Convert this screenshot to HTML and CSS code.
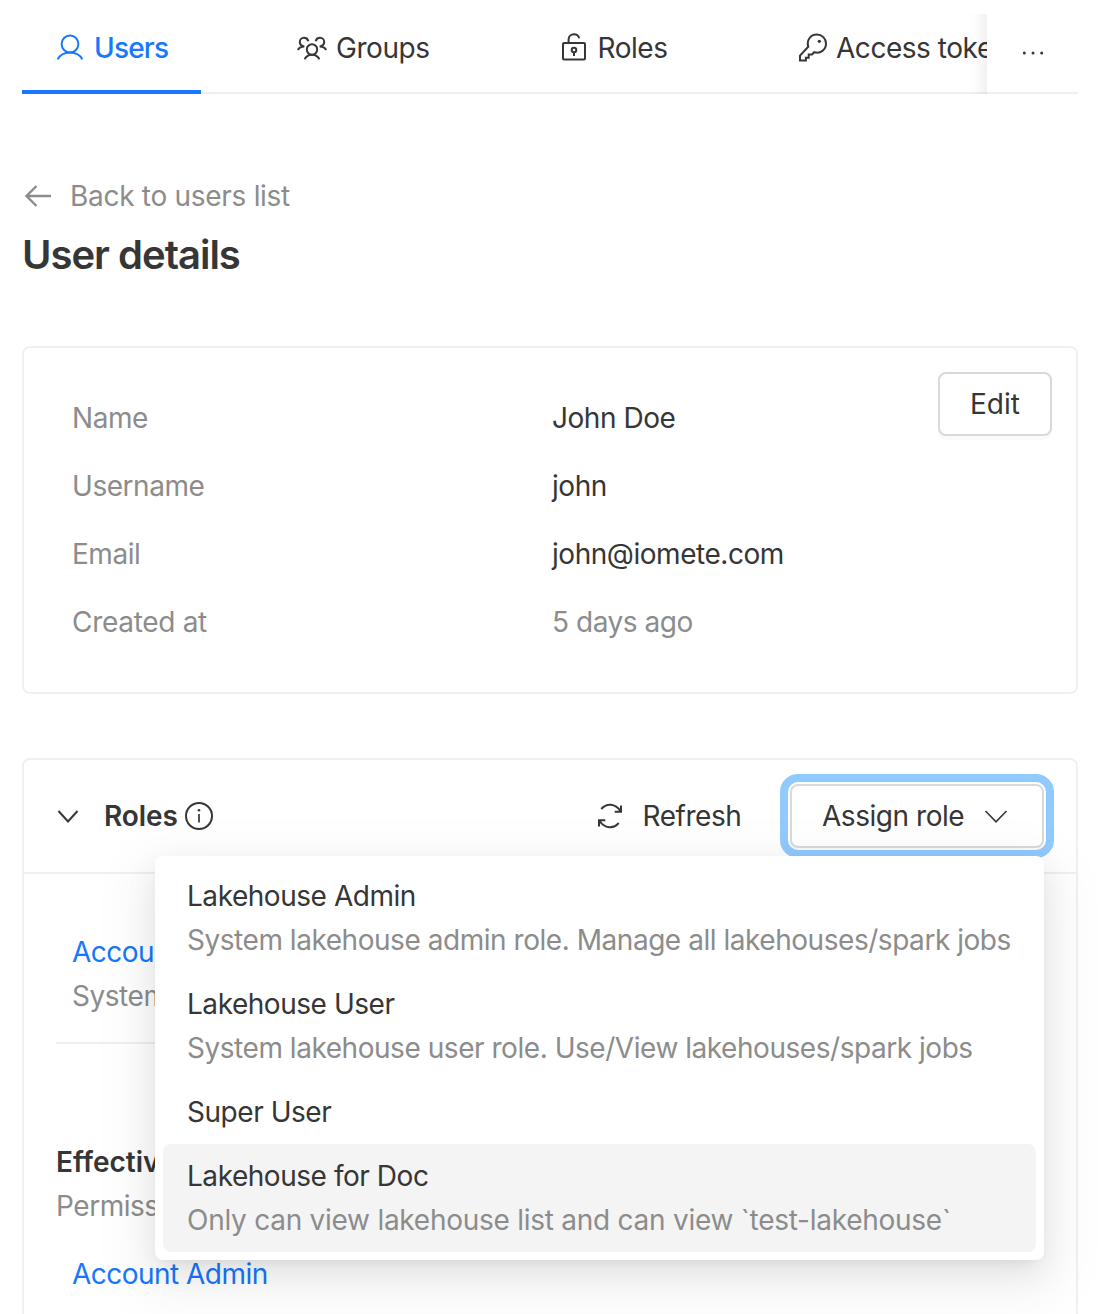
FILE: index.html
```html
<!DOCTYPE html>
<html lang="en">
<head>
<meta charset="utf-8">
<title>User details</title>
<link rel="stylesheet" href="styles.css">
</head>
<body>
<div class="page">
  <nav class="tabs">
    <div class="tabs-list">
      <a class="tab tab-users active">
        <svg class="icon" width="28" height="28" viewBox="0 0 28 28"><circle cx="14" cy="10" r="8.400"/><path d="M1.600 25.400C4 20.600 8.600 18.400 14 18.400s10 2.200 12.400 7"/></svg>
        <span>Users</span>
      </a>
      <a class="tab tab-groups">
        <svg class="icon" width="30" height="24" viewBox="0 0 30 24"><circle cx="15" cy="13.500" r="5.200"/><path d="M7.600 23.200c1.600-3 4.200-4.400 7.400-4.400s5.800 1.400 7.400 4.400M.800 14c1-1.800 2.900-3.300 6.500-3.400-2.800-.4-4.500-2.200-4.500-4.500 0-2.500 1.900-4.300 4.300-4.300 2.100 0 3.700 1.300 4.200 3.400M29.200 14c-1-1.800-2.900-3.300-6.500-3.400 2.800-.4 4.500-2.200 4.500-4.500 0-2.500-1.900-4.300-4.300-4.300-2.100 0-3.700 1.300-4.200 3.400"/></svg>
        <span>Groups</span>
      </a>
      <a class="tab tab-roles">
        <svg class="icon" width="26" height="28" viewBox="0 1 26 28"><rect x="2" y="10" width="22" height="16.500" rx="1"/><path d="M7.600 10V6.500c0-3 2.300-5.300 5.400-5.300 2.500 0 4.600 1.500 5.200 4M13 19v4"/><circle cx="13" cy="17" r="2.300"/></svg>
        <span>Roles</span>
      </a>
      <a class="tab tab-tokens">
        <svg class="icon" width="28" height="28" viewBox="0 0.700 28 28"><path d="M9.300 13.500C7.300 7 11.500 1.200 17.800 1.200c5.200 0 9.200 4 9.200 9 0 6.200-5.500 10.500-11.800 8.700l-2.200 2.300H9.700v3.200H6.900v2.700H1v-4.800z"/><circle class="dot" cx="20.300" cy="8" r="1.600"/></svg>
        <span>Access tokens</span>
      </a>
    </div>
    <button class="tabs-more" aria-label="More"><svg width="24" height="6" viewBox="0 0 24 6"><circle cx="3.300" cy="3" r="1.500"/><circle cx="12" cy="3" r="1.500"/><circle cx="20.700" cy="3" r="1.500"/></svg></button>
  </nav>

  <a class="back">
    <svg class="icon" width="28" height="24" viewBox="0 0 28 24"><path d="M27 12H2.500M12.500 2 2.500 12l10 10"/></svg>
    <span>Back to users list</span>
  </a>
  <h1 class="title">User details</h1>

  <section class="card info">
    <dl class="fields">
      <dt>Name</dt><dd>John Doe</dd>
      <dt>Username</dt><dd>john</dd>
      <dt>Email</dt><dd>john@iomete.com</dd>
      <dt class="created">Created at</dt><dd class="muted">5 days ago</dd>
    </dl>
    <button class="btn edit">Edit</button>
  </section>

  <section class="card roles">
    <header class="roles-head">
      <svg class="icon" width="22" height="14" viewBox="0 0 22 14"><path d="M1.500 2 11 12.500 20.500 2"/></svg>
      <h2 class="roles-title">Roles</h2>
      <svg class="icon" width="28" height="28" viewBox="0 0 28 28"><circle cx="14" cy="14" r="13"/><path class="stem" d="M14 12v8.500"/><circle class="dot" cx="14" cy="8.300" r="1.300"/></svg>
      <button class="refresh">
        <svg class="icon" width="26" height="26" viewBox="0 0 26 26"><path d="M4.300 6C9.500 0 18.200.2 23.600 8.300M24 2.500v6.300h-6.300M21.700 20C16.500 26 7.800 25.800 2.400 17.700M2 23.500v-6.300h6.300"/></svg>
        <span>Refresh</span>
      </button>
      <div class="assign">
        <button class="btn assign-btn">
          <span>Assign role</span>
          <svg class="icon thin" width="24" height="14" viewBox="0 0 24 14"><path d="M1.500 2 12 12.800 22.500 2"/></svg>
        </button>
        <ul class="menu">
          <li class="option"><div>Lakehouse Admin</div><div class="desc">System lakehouse admin role. Manage all lakehouses/spark jobs</div></li>
          <li class="option"><div>Lakehouse User</div><div class="desc">System lakehouse user role. Use/View lakehouses/spark jobs</div></li>
          <li class="option"><div>Super User</div></li>
          <li class="option hovered"><div>Lakehouse for Doc</div><div class="desc">Only can view lakehouse list and can view `test-lakehouse`</div></li>
        </ul>
      </div>
    </header>
    <div class="roles-body">
      <div class="role-item"><a class="link">Account Admin</a><div class="desc">System account admin role</div></div>
      <h3 class="subhead">Effective permissions</h3>
      <div class="desc">Permissions from roles</div>
      <div class="role-item last"><a class="link">Account Admin</a></div>
    </div>
  </section>
</div>
</body>
</html>
```
FILE: styles.css
```css
* { box-sizing: border-box; }

body {
  margin: 0;
  background: #fff;
  color: #363636;
  font-family: Inter, "Liberation Sans", sans-serif;
  font-size: 28px;
  line-height: 44px;
  letter-spacing: -0.46px;
}

h1, h2, h3, dl, dd, ul { margin: 0; padding: 0; }
button { font: inherit; letter-spacing: inherit; color: inherit; background: none; border: 0; padding: 0; }
span, a, dt, dd, div { white-space: nowrap; }

.page {
  height: 1314px;
  padding: 14px 22px 0;
  overflow: hidden;
  display: flex;
  flex-direction: column;
}

.icon { display: block; flex: none; overflow: visible; fill: none; stroke: currentColor; stroke-width: 2; }
.icon .dot { fill: currentColor; stroke: none; }
.icon .stem { stroke-width: 1.700; }
.icon.thin { stroke-width: 1.600; }

.tabs { display: flex; height: 80px; flex: none; border-bottom: 2px solid #f0f0f0; }
.tabs-list { display: flex; width: 965px; height: 80px; overflow: hidden; position: relative; }
.tabs-list::after {
  content: "";
  position: absolute;
  top: 0;
  right: 0;
  bottom: 0;
  width: 64px;
  box-shadow: inset -20px 0 16px -16px rgba(0, 0, 0, 0.08);
}
.tab { display: flex; align-items: center; flex: none; gap: 10px; height: 80px; padding-bottom: 12px; }
.tab-users { width: 179px; padding-left: 34px; }
.tab-groups { margin-left: 96px; width: 190px; gap: 9px; }
.tab-roles { margin-left: 74px; width: 160px; gap: 10.500px; }
.tab-tokens { margin-left: 78px; gap: 9px; }
.tab.active { color: #1677ff; font-weight: 500; letter-spacing: -0.8px; border-bottom: 4px solid #1677ff; padding-bottom: 8px; }
.tabs-more { flex: 1; display: flex; align-items: center; justify-content: center; padding-bottom: 1px; fill: #363636; }

.back { display: flex; align-items: center; gap: 18px; margin-top: 80px; padding-left: 2px; color: #8c8c8c; letter-spacing: -0.29px; }
.back .icon { stroke-width: 2.400; }
.title { font-size: 40px; line-height: 56px; font-weight: 600; letter-spacing: -1px; margin-top: 9px; }

.card { border: 2px solid #f0f0f0; border-radius: 8px; flex: none; }
.info { display: flex; align-items: flex-start; padding: 24px; height: 348px; margin-top: 63px; }
.fields { flex: 1; display: grid; grid-template-columns: 480px 1fr; row-gap: 24px; padding: 24px 0 0 24px; }
.fields dt, .muted, .desc { color: #8c8c8c; }
.fields .created { letter-spacing: -0.3px; }

.btn {
  height: 64px;
  border: 2px solid #d9d9d9;
  border-radius: 8px;
  background: #fff;
  box-shadow: 0 4px 0 rgba(0, 0, 0, 0.02);
}
.edit { width: 114px; letter-spacing: 0; }

.roles { margin-top: 64px; height: 700px; }
.roles-head { display: flex; align-items: center; height: 114px; padding: 0 32px 0 33px; border-bottom: 2px solid #f0f0f0; }
.roles-title { font-size: 28px; line-height: 44px; font-weight: 600; letter-spacing: -0.1px; margin-left: 25px; width: 81px; }
.refresh { display: flex; align-items: center; gap: 19.500px; margin-left: auto; width: 145px; }
.assign { position: relative; margin-left: 48px; }
.assign-btn {
  display: flex;
  align-items: center;
  justify-content: space-between;
  width: 254px;
  padding: 0 34px 0 30px;
  outline: 8px solid #91caff;
  outline-offset: 2px;
}

.menu {
  position: absolute;
  top: 72px;
  right: 0;
  width: 889px;
  padding: 8px;
  list-style: none;
  background: #fff;
  border-radius: 8px;
  box-shadow: 0 12px 32px rgba(0, 0, 0, 0.08), 0 6px 12px -8px rgba(0, 0, 0, 0.12), 0 18px 56px 16px rgba(0, 0, 0, 0.05);
}
.option { padding: 10px 24px; border-radius: 8px; }
.hovered { background: #f4f4f4; }
.hovered .desc { letter-spacing: -0.26px; }

.roles-body { padding: 32px; }
.role-item { padding: 24px 16px; border-bottom: 2px solid #f0f0f0; }
.role-item.last { border: 0; }
.link { display: block; color: #1677ff; letter-spacing: -0.52px; }
.subhead { font-size: 28px; line-height: 44px; font-weight: 600; letter-spacing: 0; margin-top: 96px; }
```
